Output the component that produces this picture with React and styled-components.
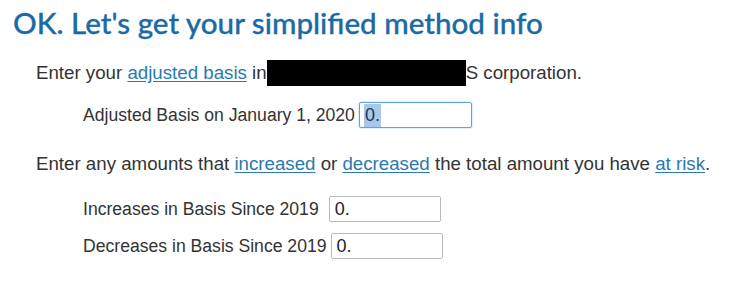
import styled, { createGlobalStyle } from 'styled-components';

const GlobalStyle = createGlobalStyle`
  body {
    margin: 0;
    background: #ffffff;
    font-family: "Liberation Sans", Arial, sans-serif;
    color: #333333;
  }
`;

const Page = styled.div`
  padding: 5px 0 0 13px;
`;

const Title = styled.h1`
  margin: 0;
  font-family: Lato, "Open Sans", sans-serif;
  font-weight: 500;
  font-size: 29.6px;
  line-height: 36px;
  color: #1b6aa5;
  -webkit-text-stroke: 0.3px #1b6aa5;
`;

const Section = styled.div`
  padding-left: 23px;
`;

const Prompt = styled.p`
  margin: ${(p) => p.$top}px 0 0;
  font-size: 18.7px;
  line-height: 28px;
  white-space: pre;
  display: flex;
  align-items: center;
`;

const Link = styled.a`
  color: #2a7ab0;
  text-decoration: underline;
  text-underline-offset: 2px;
`;

const Redacted = styled.span`
  display: inline-block;
  width: 199px;
  height: 26px;
  background: #000;
`;

const Fields = styled.div`
  display: flex;
  flex-direction: column;
  gap: 11px;
  margin-top: ${(p) => p.$top}px;
  padding-left: 47px;
`;

const Row = styled.label`
  display: flex;
  align-items: center;
  gap: 4px;
  font-size: 17.6px;
  color: #333;
`;

const Input = styled.input`
  box-sizing: border-box;
  width: 112px;
  height: 26px;
  margin-left: ${(p) => p.$shift || 0}px;
  padding: 0 5px;
  font-family: "Liberation Sans", Arial, sans-serif;
  font-size: 18px;
  color: #222;
  border: 1px solid #b9b9b9;
  border-radius: 2px;
  outline: none;
`;

const FocusedInput = styled.span`
  box-sizing: border-box;
  display: inline-flex;
  align-items: center;
  width: 113px;
  height: 26px;
  padding: 0 4px;
  font-size: 18px;
  color: #1d3550;
  border: 1px solid #5fa6d4;
  border-radius: 2px;
  box-shadow: 0 0 2px #8cc3e8;
`;

const Selected = styled.span`
  background: #a7c8e8;
  padding: 1px 1px;
`;

export default function App() {
  return (
    <>
      <GlobalStyle />
      <Page>
        <Title>OK. Let's get your simplified method info</Title>
        <Section>
          <Prompt $top={18}>
            Enter your <Link href="#">adjusted basis</Link> in<Redacted />S corporation.
          </Prompt>
          <Fields $top={15}>
            <Row>
              Adjusted Basis on January 1, 2020
              <FocusedInput>
                <Selected>0.</Selected>
              </FocusedInput>
            </Row>
          </Fields>
          <Prompt $top={22}>
            Enter any amounts that <Link href="#">increased</Link> or{' '}
            <Link href="#">decreased</Link> the total amount you have{' '}
            <Link href="#">at risk</Link>.
          </Prompt>
          <Fields $top={18}>
            <Row>
              Increases in Basis Since 2019
              <Input defaultValue="0." $shift={6} />
            </Row>
            <Row>
              Decreases in Basis Since 2019
              <Input defaultValue="0." />
            </Row>
          </Fields>
        </Section>
      </Page>
    </>
  );
}
